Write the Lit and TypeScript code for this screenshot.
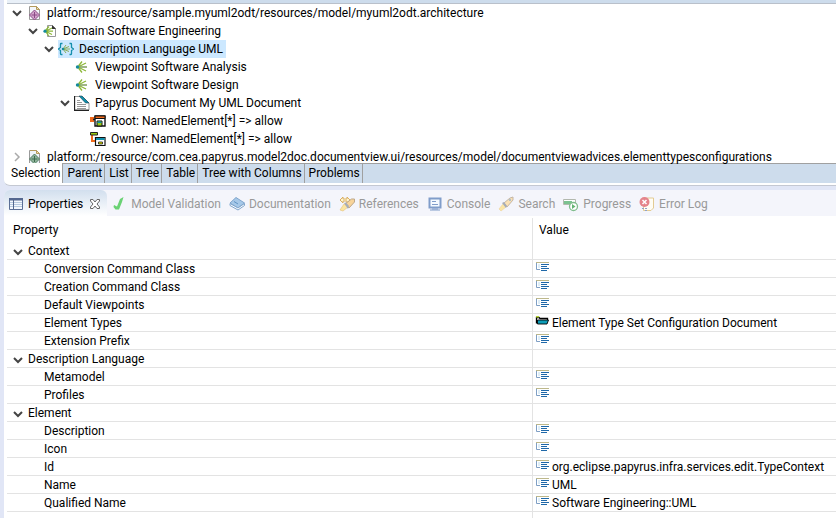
import { LitElement, html, css, svg, nothing } from "lit";
import type { TemplateResult } from "lit";
import { customElement, property, state } from "lit/decorators.js";
import { classMap } from "lit/directives/class-map.js";

const burst = svg`
  <g stroke-width="1.3" fill="none">
    <path stroke="#8db83a" d="M4.500 7 8 2.500M5 7.500 12 4M4.500 9 8 13.500M5 8.500 12 12"/>
    <path stroke="#7f9f5c" d="M5 8H13"/>
  </g>
  <circle cx="3.500" cy="8" r="1.700" fill="#148a9c"/>`;

const icons: Record<string, TemplateResult> = {
  model: svg`
    <path d="M3.500 1.500H10.500L13.500 4.500V14.500H3.500Z" fill="#f4f7fb" stroke="#9a9a9a"/>
    <path d="M4 1.500H10.500L13.500 4.500H10.500V1.500" fill="#f3e3b0" stroke="#b49a5c"/>
    <path d="M8.500 5 13.500 10 8.500 15 3.500 10Z" fill="#d3a3cc" stroke="#8a4a86"/>
    <path d="M8.500 7V13M5.500 10H11.500" stroke="#8a4a86"/>`,
  types: svg`
    <path d="M3.500 1.500H10.500L13.500 4.500V14.500H3.500Z" fill="#eef4fa" stroke="#9a9a9a"/>
    <path d="M4 1.500H10.500L13.500 4.500H10.500V1.500" fill="#f3e3b0" stroke="#b49a5c"/>
    <path d="M8.500 5 13.500 10 8.500 15 3.500 10Z" fill="#8fb39a" stroke="#4d7b5e"/>
    <path d="M8.500 7V13M5.500 10H11.500" stroke="#3d6b4e"/>`,
  domain: svg`
    <path d="M5.500 2.500H10.500L13.500 5.500V13.500H5.500Z" fill="#fff" stroke="#999"/>
    <path d="M10 2V6H14Z" fill="#333"/>
    <g stroke-width="1.200" fill="none" stroke="#8db83a"><path d="M3.500 7.500 7 3.500M4 8 10 5M3.500 8.500 7 13M4 8.500 10 11.500M4 8.200H11"/></g>
    <circle cx="3" cy="8.200" r="1.600" fill="#148a9c"/>`,
  language: svg`
    <path d="M4.500 2.500H3Q2.500 2.500 2.500 3V6.500L.500 8 2.500 9.500V13Q2.500 13.500 3 13.500H4.500M11.500 2.500H13Q13.500 2.500 13.500 3V6.500L15.500 8 13.500 9.500V13Q13.500 13.500 13 13.500H11.500" fill="none" stroke="#1690ad" stroke-width="1.300"/>
    <path d="M5 8 8 4M5 8 11 5.500M5 8H12M5 8 11 10.500M5 8 8 12" stroke="#8aac58" stroke-width="1"/>
    <circle cx="5" cy="8" r="1.300" fill="#148a9c"/>`,
  viewpoint: burst,
  document: svg`
    <path d="M.500 1.500H8.500L15 8V15H.500Z" fill="#fff" stroke="#999"/>
    <path d="M.500 1V15.500H15" fill="none" stroke="#222" stroke-width="1.300"/>
    <path d="M5 1H8L15 8H11.500Z" fill="#0e8fab" stroke="#245" stroke-width=".600"/>
    <path d="M3 5.500H6M3 7.500H8M3 9.500H12M3 11.500H12M3 13.500H12" stroke="#999"/>`,
  root: svg`
    <path d="M0 4H4V9H0Z" fill="#f26a1b"/><path d="M3 6.500H6" stroke="#222" stroke-width="1.300"/>
    <path d="M5 3H15V13H5Z" fill="#fff" stroke="#111" stroke-width="1.400"/>
    <path d="M5 3H15V5.500H5Z" fill="#f26a1b" stroke="#111"/>
    <path d="M7 8H12V13H7Z" fill="#9acb13" stroke="#111"/><path d="M7.500 8.500H11.500V10H7.500Z" fill="#0e8fab"/>`,
  owner: svg`
    <path d="M2 4V10H6" stroke="#f26a1b" stroke-width="2" fill="none"/>
    <path d="M.500 1.500H7.500V4H.500Z" fill="#9acb13" stroke="#222"/>
    <path d="M5.500 6.500H15V14.500H5.500Z" fill="#fff" stroke="#111" stroke-width="1.200"/>
    <path d="M6 7H14.500V9H6Z" fill="#0e8fab"/><path d="M8.500 11H12.500V13H8.500Z" fill="#e6e600" stroke="#222" stroke-width=".800"/>`,
  properties: svg`
    <path d="M1.500 2.500H14.500V13.500H1.500Z" fill="#f4f8fd" stroke="#5b6f96"/>
    <path d="M1 2H15V4.500H1Z" fill="#54688f"/>
    <path d="M2 6.500H14M2 8.500H14M2 10.500H14" stroke="#b7cadf"/>
    <path d="M5.500 4V13" stroke="#54688f"/>`,
  check: svg`<path d="M3 9 6 10.500 9 3 12.500 1 11 6 8 13.500H4.500L2.500 11Z" fill="#6ad274"/>`,
  book: svg`
    <path d="M1 7 7 1.500 15.500 7 9 12Z" fill="#a6c8e8" stroke="#7fa5cc"/>
    <path d="M1 7.500 9 12 15.500 7.500V9.500L9 14 1 9.500Z" fill="#fff" stroke="#7fa5cc"/>
    <path d="M5 5.500 9 8" stroke="#5f92c3"/>`,
  references: svg`
    <path d="M1 4 4 1V3H8V1L11 4 8 7V5H4V7Z" fill="#fff4cf" stroke="#d9af61"/>
    <path d="M1 14 5 8 9 11 4 15Z" fill="#fbe5a3" stroke="#e6c277" stroke-width=".600"/>
    <path d="M6 8 12.500 3H15.500V6L10 12Z" fill="#f8d49a" stroke="#bda789"/><path d="M5 7 7 6.500 10 10 9 13Z" fill="#a7adb8"/>`,
  console: svg`
    <path d="M2.500 2.500H13.500V11.500H2.500Z" fill="#f5faff" stroke="#809dca" stroke-width="2"/>
    <path d="M5 5.500H9M5 8.500H11" stroke="#809dca"/><path d="M5 13H11M3 14H13" stroke="#809dca"/>`,
  search: svg`
    <path d="M1 13 5 8 8 11 3 15Z" fill="#fbe6a7" stroke="#ecd398" stroke-width=".600"/>
    <path d="M6 7 12 2 15 1V4L9 11Z" fill="#fae1b5" stroke="#c4b6a5"/>
    <path d="M4 7 6 6 9 10 8 12Z" fill="#a7adb8"/><circle cx="12" cy="4" r="1" fill="#9db4ce"/>`,
  progress: svg`
    <path d="M.500 3.500H12.500V8.500H.500Z" fill="#fff" stroke="#b2b8ae"/><path d="M1 5H9V8H1Z" fill="#7bc290"/>
    <circle cx="10.500" cy="10.500" r="4" fill="#fff" stroke="#81bd8d" stroke-width="1.300"/><path d="M9 8V13L12.500 10.500Z" fill="#64b473"/>`,
  error: svg`
    <path d="M8 2H14.500V12L12 14.500H4.500V10" fill="#fffdf4" stroke="#e3cb92"/>
    <circle cx="5.500" cy="6" r="5" fill="#e4848b"/><path d="M3.500 4 7.500 8M7.500 4 3.500 8" stroke="#fff" stroke-width="1.500"/>
    <path d="M3 12.500H5M6 12.500H8M6 14.500H8" stroke="#91a3c7"/>`,
  text: svg`
    <path d="M1 2.500H14" stroke="#bdb88b"/><path d="M1.500 3V9.500H5" fill="none" stroke="#7f9fc4"/>
    <path d="M4 4V8" stroke="#bcdcf0"/><path d="M6 4.500H14M6 6.500H12M6 8.500H14M6 10.500H12" stroke="#1f68a8"/>`,
  folder: svg`
    <path d="M1.500 9.500V3.500H4L5 4.500H12.500V6" fill="#fff" stroke="#000" stroke-width="1.300"/><path d="M1 2H4V3.500H1Z" fill="#b5d334"/>
    <path d="M2.500 6H13.500L12 10H2.500Z" fill="#0e9db8" stroke="#000" stroke-width=".900"/>`,
};

const icon = (name: string) => html`<svg class="icon" viewBox="0 0 16 16" aria-hidden="true">${icons[name]}</svg>`;

const chevron = (open: boolean) => html`<svg class="chevron" viewBox="0 0 10 10" aria-hidden="true">
  <path d=${open ? "M1 3 5 7 9 3" : "M3 1 7 5 3 9"} fill="none" stroke=${open ? "#444" : "#aaa"} stroke-width=${open ? 2 : 1.5} /></svg>`;

const base = css`
  * { box-sizing: border-box; }
  button { font: inherit; color: inherit; border: 0; padding: 0; margin: 0; background: none; }
  .icon { width: 16px; height: 16px; flex: none; display: block; }
  .chevron { width: 10px; height: 10px; display: block; }
`;

interface Node { label: string; icon: string; open?: boolean; selected?: boolean; children?: Node[] }

const tree: Node[] = [
  { label: "platform:/resource/sample.myuml2odt/resources/model/myuml2odt.architecture", icon: "model", open: true, children: [
    { label: "Domain Software Engineering", icon: "domain", open: true, children: [
      { label: "Description Language UML", icon: "language", open: true, selected: true, children: [
        { label: "Viewpoint Software Analysis", icon: "viewpoint" },
        { label: "Viewpoint Software Design", icon: "viewpoint" },
        { label: "Papyrus Document My UML Document", icon: "document", open: true, children: [
          { label: "Root: NamedElement[*] => allow", icon: "root" },
          { label: "Owner: NamedElement[*] => allow", icon: "owner" },
        ] },
      ] },
    ] },
  ] },
  { label: "platform:/resource/com.cea.papyrus.model2doc.documentview.ui/resources/model/documentviewadvices.elementtypesconfigurations", icon: "types", open: false, children: [] },
];

@customElement("model-tree")
export class ModelTree extends LitElement {
  @property({ attribute: false }) nodes: Node[] = [];

  static styles = [base, css`
    :host { display: block; background: #fff; padding-left: 8px; }
    ul { list-style: none; margin: 0; padding: 0; }
    .children { padding-left: 16px; }
    .row { display: flex; align-items: center; height: 18px; }
    .toggle { width: 14px; flex: none; }
    .item { display: flex; align-items: center; height: 18px; gap: 2px; white-space: nowrap; }
    .label { padding: 0 3px; line-height: 18px; }
    .selected { background: #cce8ff; }
  `];

  private toggle(node: Node) {
    node.open = !node.open;
    this.requestUpdate();
  }

  private renderNode(node: Node): TemplateResult {
    return html`<li role="treeitem">
      <div class="row">
        ${node.children
          ? html`<button class="toggle" aria-label="Toggle ${node.label}" @click=${() => this.toggle(node)}>${chevron(!!node.open)}</button>`
          : html`<span class="toggle"></span>`}
        <span class=${classMap({ item: true, selected: !!node.selected })}>${icon(node.icon)}<span class="label">${node.label}</span></span>
      </div>
      ${node.open && node.children
        ? html`<ul class="children" role="group">${node.children.map((c) => this.renderNode(c))}</ul>` : nothing}
    </li>`;
  }

  render() {
    return html`<ul role="tree">${this.nodes.map((n) => this.renderNode(n))}</ul>`;
  }
}

interface Entry { name: string; value?: string; icon?: string }

const groups: { name: string; entries: Entry[] }[] = [
  { name: "Context", entries: [
    { name: "Conversion Command Class" },
    { name: "Creation Command Class" },
    { name: "Default Viewpoints" },
    { name: "Element Types", value: "Element Type Set Configuration Document", icon: "folder" },
    { name: "Extension Prefix" },
  ] },
  { name: "Description Language", entries: [{ name: "Metamodel" }, { name: "Profiles" }] },
  { name: "Element", entries: [
    { name: "Description" },
    { name: "Icon" },
    { name: "Id", value: "org.eclipse.papyrus.infra.services.edit.TypeContext" },
    { name: "Name", value: "UML" },
    { name: "Qualified Name", value: "Software Engineering::UML" },
  ] },
];

@customElement("property-table")
export class PropertyTable extends LitElement {
  @state() private closed: string[] = [];

  static styles = [base, css`
    :host { display: flex; flex-direction: column; background: #fff; padding: 2px 0 0 3px; }
    table { width: 100%; border-collapse: separate; border-spacing: 0; table-layout: fixed; }
    .name { width: 526px; }
    th, td { padding: 0; text-align: left; font-weight: normal; line-height: 15px; height: 18px; border-bottom: 1px solid #e3e3e3; white-space: nowrap; }
    th { padding-top: 2px; }
    .head { height: 24px; border-bottom: 0; padding: 0 0 0 6px; }
    .split { border-right: 1px solid #e3e3e3; }
    .group { display: flex; align-items: center; gap: 5px; height: 15px; padding-left: 6px; }
    .entry { padding-left: 37px; }
    .value { display: flex; align-items: flex-start; gap: 1px; height: 17px; padding-left: 2px; }
    .content { padding-top: 2px; }
    .rest { flex: 1; width: 526px; border-right: 1px solid #e3e3e3; }
  `];

  private toggle(name: string) {
    this.closed = this.closed.includes(name) ? this.closed.filter((n) => n !== name) : [...this.closed, name];
  }

  render() {
    return html`<table>
      <colgroup><col class="name" /><col /></colgroup>
      <thead><tr><th class="head split" scope="col">Property</th><th class="head" scope="col">Value</th></tr></thead>
      <tbody>
        ${groups.map((g) => {
          const open = !this.closed.includes(g.name);
          return html`
            <tr><th class="split" scope="rowgroup"><button class="group" aria-expanded=${open} @click=${() => this.toggle(g.name)}>${chevron(open)}<span>${g.name}</span></button></th><td></td></tr>
            ${open ? g.entries.map((e) => html`<tr>
              <th class="split entry" scope="row">${e.name}</th>
              <td><span class="value">${icon(e.icon ?? "text")}<span class="content">${e.value ?? ""}</span></span></td>
            </tr>`) : nothing}`;
        })}
      </tbody>
    </table><div class="rest"></div>`;
  }
}

const pages = ["Selection", "Parent", "List", "Tree", "Table", "Tree with Columns", "Problems"];

const views = [
  { label: "Model Validation", icon: "check" },
  { label: "Documentation", icon: "book" },
  { label: "References", icon: "references" },
  { label: "Console", icon: "console" },
  { label: "Search", icon: "search" },
  { label: "Progress", icon: "progress" },
  { label: "Error Log", icon: "error" },
];

@customElement("app-root")
export class AppRoot extends LitElement {
  @state() private page = "Selection";

  static styles = [base, css`
    :host { display: flex; flex-direction: column; min-height: 100vh; padding-left: 4px; overflow: hidden; background: #e1e6f6; color: #000; font: 12px/18px Roboto, "Noto Sans", sans-serif; }
    .editor { background: #fff; border-bottom: 1px solid #c4c8d2; border-bottom-left-radius: 6px; overflow: hidden; padding-bottom: 2px; }
    .strip { height: 4px; margin-left: 3px; background: linear-gradient(90deg, #e9f0f8 24px, #cddcec 24px); border-bottom: 1px solid #b9c0ca; }
    .tree { margin-bottom: -3px; }
    .pages { display: flex; height: 20px; background: linear-gradient(#a0a0a0 1px, #cddcec 1px); }
    .page { padding: 0 2px 0 4px; border-right: 1px solid #a0a0a0; line-height: 20px; white-space: nowrap; }
    .current { background: #fff; padding-left: 7px; }
    .views { display: flex; height: 26px; margin-top: 4px; background: #f4f5fb; border-top-left-radius: 6px; color: #999; overflow: hidden; }
    .view { display: flex; align-items: center; gap: 4px; padding: 2px 4px 0; white-space: nowrap; }
    .active { gap: 6px; padding: 2px 6px 0 4px; color: #000; background: linear-gradient(#d2dfee, #fff); border-top-right-radius: 6px; }
    .title { display: flex; align-items: center; gap: 4px; }
    .close { width: 12px; height: 12px; }
    .cross { display: block; width: 12px; height: 12px; }
    .table { flex: 1; }
  `];

  render() {
    return html`
      <section class="editor">
        <div class="strip"></div>
        <model-tree class="tree" .nodes=${tree}></model-tree>
        <nav class="pages">
          ${pages.map((p) => html`<button class=${classMap({ page: true, current: p === this.page })} @click=${() => (this.page = p)}>${p}</button>`)}
        </nav>
      </section>
      <nav class="views">
        <div class="view active">
          <button class="title">${icon("properties")}<span>Properties</span></button>
          <button class="close" aria-label="Close Properties"><svg class="cross" viewBox="0 0 12 12">
            <path d="M1.500 1.500H4L6 4 8 1.500H10.500V3L8 6 10.500 9V10.500H8L6 8 4 10.500H1.500V9L4 6 1.500 3Z" fill="#fff" stroke="#666"/></svg></button>
        </div>
        ${views.map((v) => html`<button class="view">${icon(v.icon)}<span>${v.label}</span></button>`)}
      </nav>
      <property-table class="table"></property-table>`;
  }
}
